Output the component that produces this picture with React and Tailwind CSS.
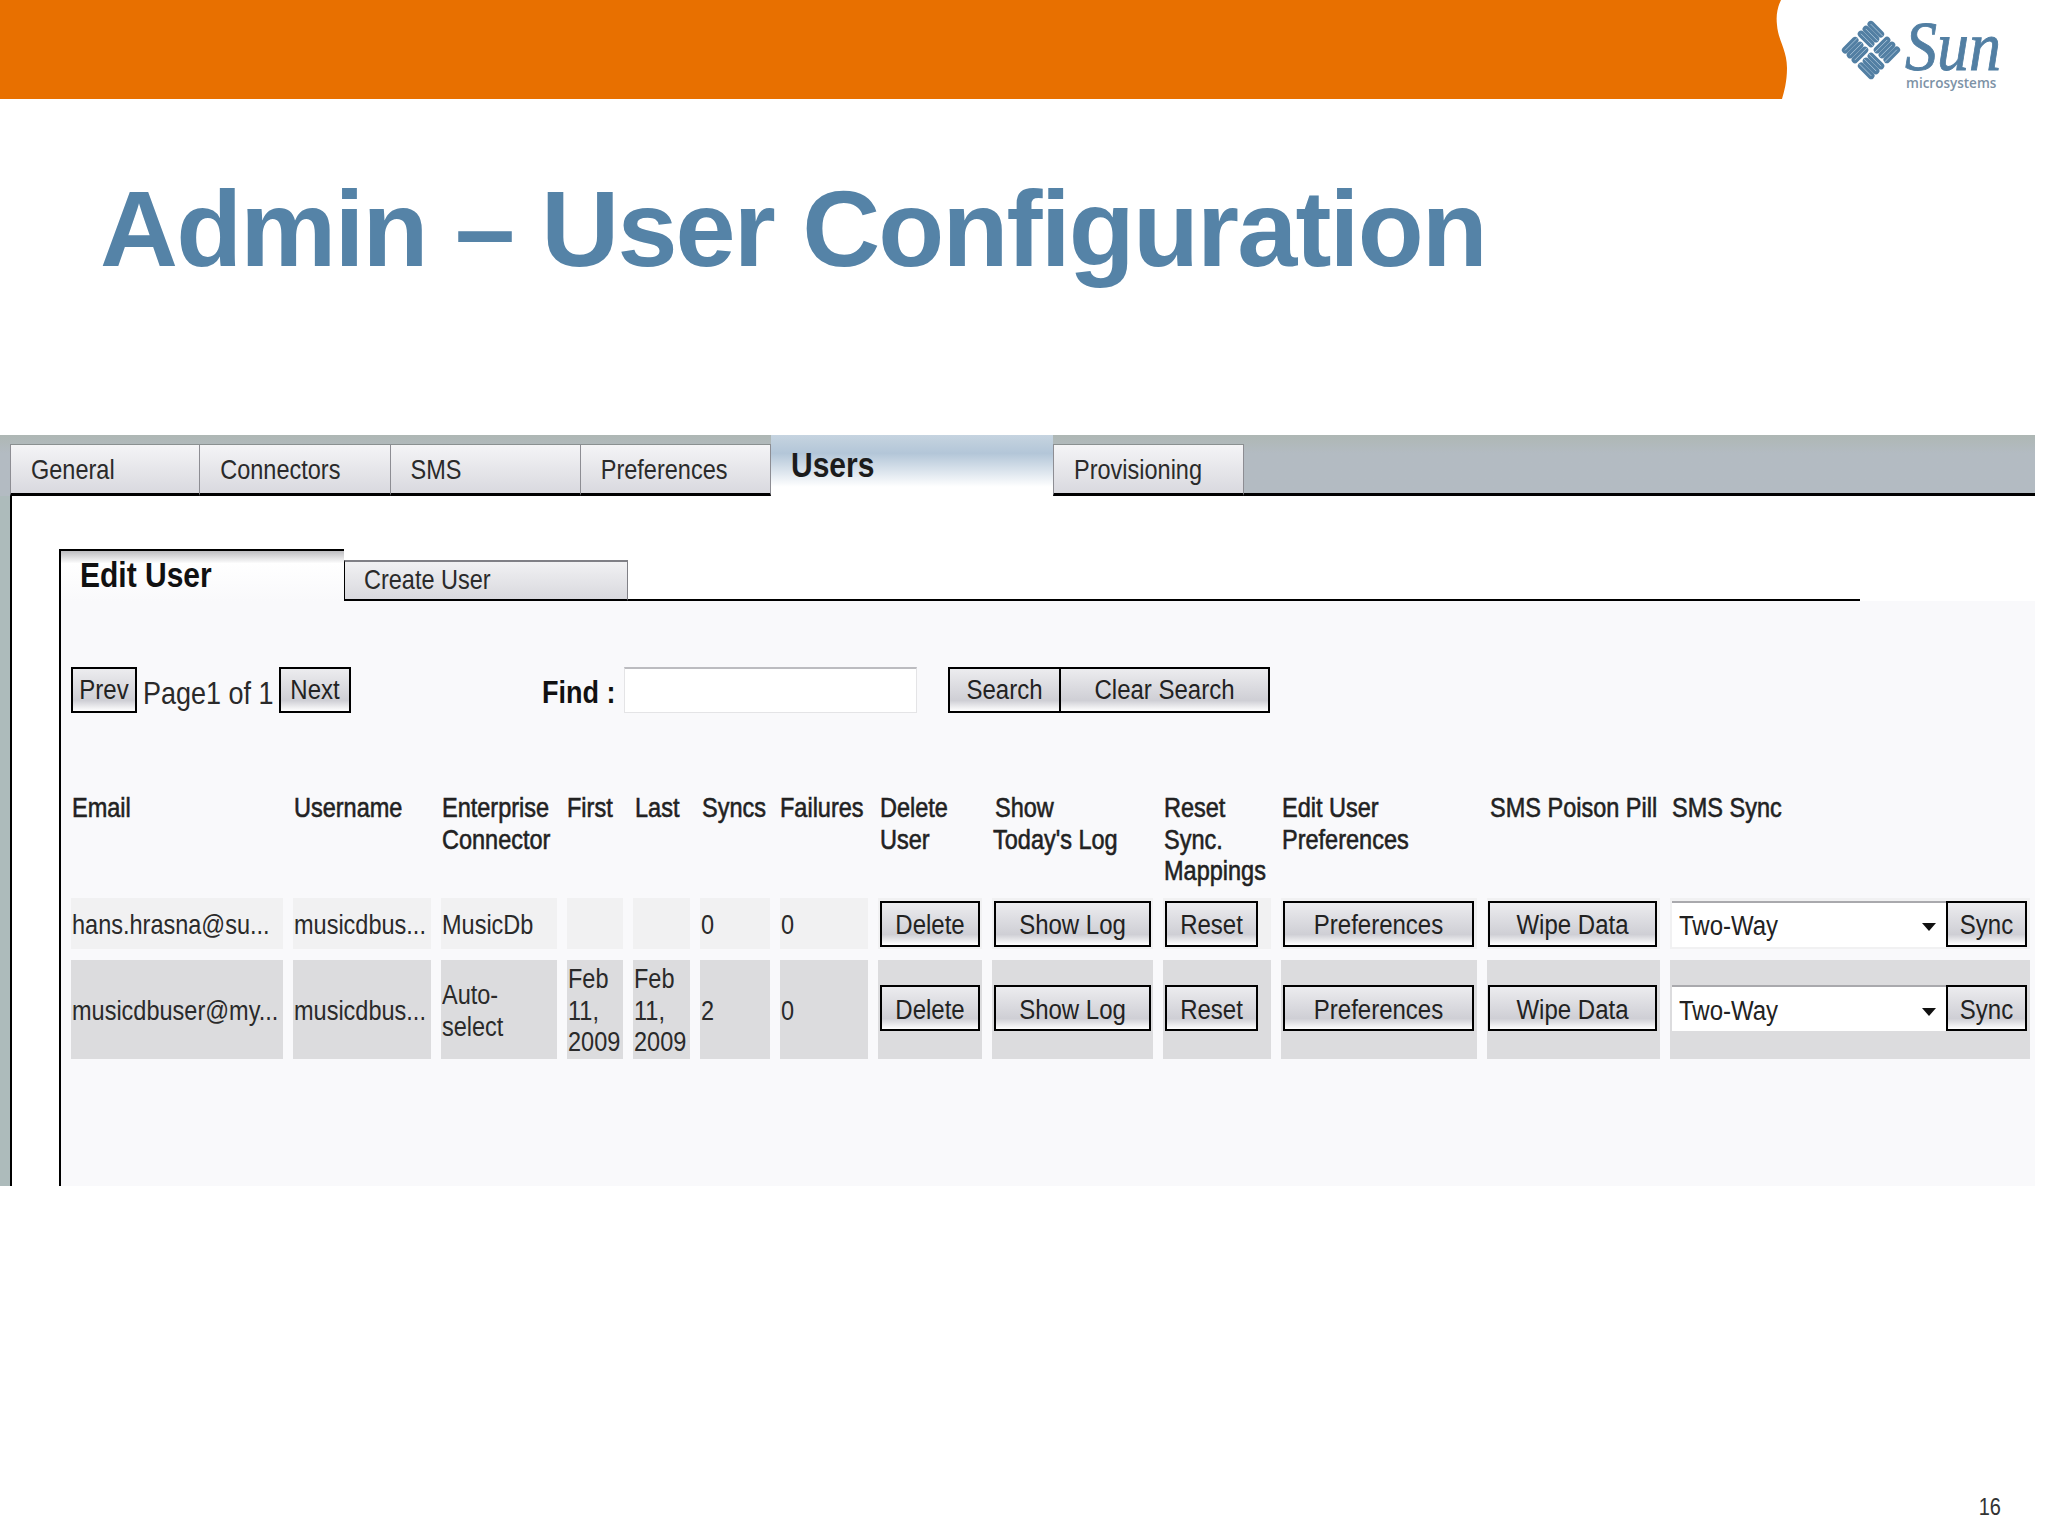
const mainTabs = ["General", "Connectors", "SMS", "Preferences"];

// stretched text, the source screenshot was squashed horizontally
function Txt({ children, className = "" }) {
  return <span className={`inline-block scale-y-[1.15] whitespace-pre ${className}`}>{children}</span>;
}

function Btn({ children, className = "", pad = "pb-[1px]" }) {
  return (
    <button className={`flex h-[46px] shrink-0 items-center justify-center border-2 border-black bg-linear-to-b from-[#ececef] via-[#cfcfd5] via-75% to-white text-[24px] text-[#222] ${pad} ${className}`}>
      <Txt>{children}</Txt>
    </button>
  );
}

function Lines({ lines }) {
  return (
    <div>
      {lines.map((l, i) => (
        <div key={i} className="h-[31.5px] leading-[31.5px]">
          <Txt>{l}</Txt>
        </div>
      ))}
    </div>
  );
}

function TabItem({ label, first, wide }) {
  return (
    <div className={`flex h-[52px] ${wide ? "w-[191px]" : "w-[190.25px]"} mt-[9px] items-center border-t border-r border-b-[3px] border-t-[#8a9090] border-r-[#8d8d93] border-b-black bg-linear-to-b from-[#f4f4f6] to-[#d9d9df] pl-[20px] pt-[3px] text-[23.5px] text-[#2a2a2a] ${first ? "border-l border-l-[#8d8d93]" : ""}`}>
      <Txt>{label}</Txt>
    </div>
  );
}

function HeadCell({ lines, pl = "pl-px" }) {
  return (
    <div className={`h-[98px] pt-[4px] text-[23.5px] text-[#222] [-webkit-text-stroke:0.5px_#222] ${pl}`}>
      <Lines lines={lines} />
    </div>
  );
}

function Cell({ lines, tone, className = "" }) {
  return (
    <div className={`flex items-center pl-px pt-[4px] text-[23.5px] text-[#2a2a2a] ${tone} ${className}`}>
      <Lines lines={lines} />
    </div>
  );
}

function ActionRow({ tone, extra = "" }) {
  const box = `flex items-center ${tone}`;
  const pad = "pt-[3px]";
  return (
    <>
      <div className={`${box} pl-[2px]`}><Btn pad={pad} className={`w-[100px] ${extra}`}>Delete</Btn></div>
      <div className={`${box} pl-[2px]`}><Btn pad={pad} className={`w-[157px] ${extra}`}>Show Log</Btn></div>
      <div className={`${box} pl-[2px]`}><Btn pad={pad} className={`w-[93px] ${extra}`}>Reset</Btn></div>
      <div className={`${box} pl-[2px]`}><Btn pad={pad} className={`w-[191px] ${extra}`}>Preferences</Btn></div>
      <div className={`${box} pl-px`}><Btn pad={pad} className={`w-[169px] ${extra}`}>Wipe Data</Btn></div>
      <div className={`${box} pl-[2px]`}>
        <div className={`flex h-[46px] w-[274px] items-center justify-between border-t-2 border-t-[#a9a9ad] bg-white pl-[7px] pr-[10px] pt-[3px] text-[24px] text-[#222] ${extra}`}>
          <Txt>Two-Way</Txt>
          <svg width="14" height="8" viewBox="0 0 14 8" className="mt-[2px]">
            <polygon points="0,0 14,0 7,8" fill="#111" />
          </svg>
        </div>
        <Btn pad={pad} className={`w-[81px] ${extra}`}>Sync</Btn>
      </div>
    </>
  );
}

function SunMark() {
  return (
    <svg width="62" height="62" viewBox="-50 -50 100 100">
      <g transform="rotate(45)">
        {[0, 90, 180, 270].map((r) => (
          <g key={r} transform={`rotate(${r})`}>
            {[1.5, 12.6, 23.7].map((x) => (
              <g key={x}>
                <rect x={x} y="-35" width="11" height="33.5" rx="5.5" fill="#527fa3" />
                <line x1={x + 5.5} y1="-30" x2={x + 5.5} y2="-2" stroke="#a8c4da" strokeWidth="1.4" />
              </g>
            ))}
          </g>
        ))}
      </g>
    </svg>
  );
}

export default function App() {
  const rowA = "bg-[#f1f1f2]";
  const rowB = "bg-[#dcdcde]";

  return (
    <div className="flex h-[1536px] w-[2048px] flex-col bg-white font-['Liberation_Sans',sans-serif]">
      {/* slide header */}
      <div className="flex h-[99px] items-start">
        <div className="h-[99px] w-[1776px] bg-[#e87000]" />
        <svg width="12" height="99" viewBox="0 0 12 99" className="shrink-0">
          <path d="M0 0 L5 0 C1 8 0 16 1 25 C2 40 11 50 11 68 C11 82 8 92 6 99 L0 99 Z" fill="#e87000" />
        </svg>
        <div className="ml-[52px] mt-[19px]">
          <SunMark />
        </div>
        <div className="ml-[3px] pt-[21px]">
          <div className="h-[52px] font-['Liberation_Serif',serif] text-[64px] italic leading-[52px] text-[#527fa3] [-webkit-text-stroke:0.8px_#527fa3]">
            <span className="inline-block scale-y-[1.1]">Sun</span>
          </div>
          <div className="mt-[3px] pl-px font-['Open_Sans',sans-serif] text-[13.5px] font-semibold leading-[14px] text-[#7d92a6]">microsystems</div>
        </div>
      </div>

      {/* title */}
      <div className="h-[336px] pl-[100px] pt-[76px]">
        <h1 className="text-[108px] font-bold leading-[108px] tracking-[-1.85px] text-[#5583a7]">Admin – User Configuration</h1>
      </div>

      {/* screenshot of the admin window */}
      <div className="flex h-[751px] w-[2035px] flex-col">
        <div className="flex h-[61px] bg-linear-to-b from-[#aeb7b4] to-[#b3bbc2] to-30% pl-[10px]">
          {mainTabs.map((t, i) => (
            <TabItem key={t} label={t} first={i === 0} />
          ))}
          <div className="flex h-[61px] w-[282px] items-start bg-linear-to-b from-[#c6d4e0] via-[#b3c6d8] via-30% to-white to-85% pl-[20px] pt-[13px] text-[30px] font-bold leading-[36px] text-[#1c1c1c]">
            <Txt>Users</Txt>
          </div>
          <TabItem label="Provisioning" first wide />
          <div className="flex-1 border-b-[3px] border-black" />
        </div>

        <div className="flex flex-1">
          <div className="w-[10px] bg-[#adbbbb]" />
          <div className="flex flex-1 flex-col border-l-2 border-black pl-[47px] pt-[53px]">
            <div className="flex h-[52px]">
              <div className="flex h-[52px] w-[285px] items-start border-l-2 border-t-2 border-black bg-linear-to-b from-[#bdbdc0] via-white via-25% to-[#f9f9fb] pl-[19px] pt-[2px] text-[30px] font-bold leading-[44px] text-[#111]">
                <Txt>Edit User</Txt>
              </div>
              <div className="mt-[11px] flex h-[41px] w-[284px] items-center border-l border-r border-t-2 border-b-2 border-l-black border-r-[#808086] border-t-[#808086] border-b-black bg-linear-to-b from-[#f1f1f3] to-[#d9d9de] pl-[19px] text-[23.5px] text-[#2a2a2a]">
                <Txt>Create User</Txt>
              </div>
              <div className="h-[52px] w-[1232px] border-b-2 border-black" />
            </div>

            <div className="flex flex-1 flex-col border-l-2 border-black bg-[#f9f9fb] pl-[10px]">
              <div className="mt-[66px] flex h-[46px] items-center">
                <Btn className="w-[66px]">Prev</Btn>
                <div className="ml-[6px] w-[136px] pt-[8px] text-[27px] text-[#2a2a2a]">
                  <Txt>Page1 of 1</Txt>
                </div>
                <Btn className="w-[72px]">Next</Btn>
                <div className="ml-[191px] w-[82px] pt-[6px] text-[27px] font-bold text-[#111]">
                  <Txt>Find :</Txt>
                </div>
                <input className="h-[46px] w-[293px] border border-t-2 border-[#e4e4e6] border-t-[#bcbcc0] bg-white" />
                <Btn className="ml-[31px] w-[113px]">Search</Btn>
                <Btn className="-ml-[2px] w-[211px]">Clear Search</Btn>
              </div>

              <div className="mt-[76px] grid grid-cols-[212px_138px_116px_56px_57px_70px_88px_104px_161px_108px_196px_173px_360px] grid-rows-[98px_51px_99px] gap-x-[10px] gap-y-[11px]">
                <HeadCell lines={["Email"]} />
                <HeadCell lines={["Username"]} />
                <HeadCell lines={["Enterprise", "Connector"]} />
                <HeadCell lines={["First"]} pl="pl-0" />
                <HeadCell lines={["Last"]} pl="pl-[2px]" />
                <HeadCell lines={["Syncs"]} pl="pl-[2px]" />
                <HeadCell lines={["Failures"]} pl="pl-0" />
                <HeadCell lines={["Delete", "User"]} pl="pl-[2px]" />
                <HeadCell lines={["\u200aShow", "Today's Log"]} />
                <HeadCell lines={["Reset", "Sync.", "Mappings"]} />
                <HeadCell lines={["Edit User", "Preferences"]} />
                <HeadCell lines={["SMS Poison Pill"]} pl="pl-[3px]" />
                <HeadCell lines={["SMS Sync"]} pl="pl-[2px]" />

                <Cell tone={rowA} lines={["hans.hrasna@su..."]} />
                <Cell tone={rowA} lines={["musicdbus..."]} />
                <Cell tone={rowA} lines={["MusicDb"]} />
                <Cell tone={rowA} lines={[""]} />
                <Cell tone={rowA} lines={[""]} />
                <Cell tone={rowA} lines={["0"]} />
                <Cell tone={rowA} lines={["0"]} />
                <ActionRow tone={rowA} />

                <Cell tone={rowB} lines={["musicdbuser@my..."]} />
                <Cell tone={rowB} lines={["musicdbus..."]} />
                <Cell tone={rowB} lines={["Auto-", "select"]} />
                <Cell tone={rowB} lines={["Feb", "11,", "2009"]} />
                <Cell tone={rowB} lines={["Feb", "11,", "2009"]} />
                <Cell tone={rowB} lines={["2"]} />
                <Cell tone={rowB} lines={["0"]} />
                <ActionRow tone={rowB} extra="mb-[3px]" />
              </div>
            </div>
          </div>
        </div>
      </div>

      {/* page number */}
      <div className="flex flex-1 justify-end pr-[47px] pt-[310px] text-[20px] leading-[24px] text-[#333]">
        <Txt>16</Txt>
      </div>
    </div>
  );
}
